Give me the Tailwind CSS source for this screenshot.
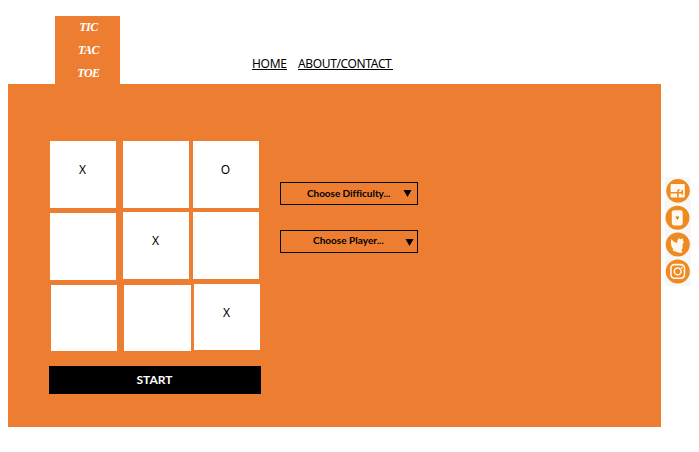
<!DOCTYPE html>
<html lang="en">
<head>
<meta charset="utf-8">
<title>Tic Tac Toe</title>
<script src="https://cdn.jsdelivr.net/npm/@tailwindcss/browser@4"></script>
</head>
<body class="w-[699px] h-[452px] overflow-hidden bg-white text-black font-['Lato','Noto_Sans',sans-serif]">
<header class="flex h-[84px] pl-[55px] pt-4">
  <div class="w-[65px] h-[68px] bg-[#ed7d31] text-white text-center italic font-bold text-[12px] leading-[23px] tracking-[-0.5px] font-['Liberation_Serif',serif] pl-[2px]">
    <p>TIC</p><p>TAC</p><p>TOE</p>
  </div>
  <nav class="flex ml-[132px] pt-[40px] text-[12px] leading-[15px] font-['Noto_Sans',sans-serif]">
    <a class="w-[35px] h-[14px] border-b border-black whitespace-nowrap tracking-[-0.3px]">HOME</a>
    <a class="ml-[11px] w-[95px] h-[14px] border-b border-black whitespace-nowrap tracking-[-0.36px]">ABOUT/CONTACT</a>
  </nav>
</header>
<div class="flex items-start pl-2">
  <main class="flex w-[653px] h-[343px] bg-[#ed7d31]">
    <section class="ml-[41px] pt-[57px] w-[212px]">
      <div class="flex h-[225px] pl-px text-[12px] leading-[14px] text-center font-['Noto_Sans',sans-serif]">
        <div class="w-[67px]">
          <div class="w-[66px] h-[67px] bg-white pt-[22px] pr-px">X</div>
          <div class="w-[66px] h-[67px] bg-white mt-[5px]"></div>
          <div class="w-[66px] h-[66px] bg-white mt-[5px] ml-px"></div>
        </div>
        <div class="w-[68px] ml-[6px]">
          <div class="w-[66px] h-[67px] bg-white"></div>
          <div class="w-[66px] h-[67px] bg-white mt-[4px] pt-[22px] pr-px">X</div>
          <div class="w-[67px] h-[66px] bg-white mt-[6px] ml-px"></div>
        </div>
        <div class="w-[67px] ml-[2px]">
          <div class="w-[66px] h-[67px] bg-white pt-[22px] pr-px">O</div>
          <div class="w-[66px] h-[67px] bg-white mt-[4px]"></div>
          <div class="w-[66px] h-[66px] bg-white mt-[5px] ml-px pt-[22px] pr-px">X</div>
        </div>
      </div>
      <button class="block w-[212px] h-[28px] bg-black text-white text-[12px] leading-[28px] font-bold text-center pr-px">START</button>
    </section>
    <section class="ml-[19px] pt-[98px] text-[10px] font-bold">
      <div class="flex items-center w-[138px] h-[23px] border border-black pl-[26px] pr-[5px]">
        <span class="w-[84px] pb-[2px] leading-[14px] whitespace-nowrap tracking-[-0.05px]">Choose Difficulty...</span>
        <svg class="ml-auto mb-px" width="9" height="7" viewBox="0 0 9 7"><path d="M.5 0h8l-4 7z"/></svg>
      </div>
      <div class="flex items-center w-[138px] h-[23px] border border-black mt-[25px] pl-[32px] pr-[3px]">
        <span class="w-[71px] pb-[3px] leading-[14px] whitespace-nowrap tracking-[0.03px]">Choose Player...</span>
        <svg class="ml-auto mt-px" width="9" height="7" viewBox="0 0 9 7"><path d="M.5 0h8l-4 7z"/></svg>
      </div>
    </section>
  </main>
  <aside class="ml-[4px] mt-[93px] w-[26px] h-[109px] bg-[#f7f7f7]">
    <svg width="26" height="109" viewBox="0 0 26 109">
      <g fill="#ee8a20">
        <circle cx="13" cy="13.8" r="11.8"/><circle cx="12.5" cy="40.8" r="12"/>
        <circle cx="12.8" cy="67.6" r="12"/><circle cx="12.8" cy="94.4" r="12"/>
      </g>
      <path d="M6.6 7h12.2q1 0 1 1v11.5q0 1-1 1H6.6q-1 0-1-1V8q0-1 1-1z" fill="#fff8ee"/>
      <path d="M5.4 15.8h11.8M12.9 20.6v-6q0-1.8 1.8-1.8M17.2 13v4.6" fill="none" stroke="#ee8a20" stroke-width="1.6"/>
      <rect x="6.8" y="33.2" width="10.9" height="15.2" rx="2.3" fill="#fff8ee"/>
      <path d="M10.4 39.5h4l-2 3.5z" fill="#dd7018"/>
      <path d="M6.2 62q-.7 4 .3 7.4l1.8 2.8-.6 1.2 4 1.6q3 1.4 5.8.4l-1-2.2q1.6-2.2 1-5.2l1.4-3.6-1-.4-.2-2.8-2.3 1-1.6-1.2q-1.8 2.6-1.6 5-3.6-.8-6-4z" fill="#fff8ee"/>
      <g fill="none" stroke="#fff8ee">
        <rect x="5.9" y="87.6" width="13.6" height="13.6" rx="3.6" stroke-width="1.6"/>
        <circle cx="12.7" cy="94.4" r="3.4" stroke-width="1.6"/>
      </g>
      <circle cx="16.8" cy="90.6" r=".9" fill="#fff8ee"/>
    </svg>
  </aside>
</div>
</body>
</html>
